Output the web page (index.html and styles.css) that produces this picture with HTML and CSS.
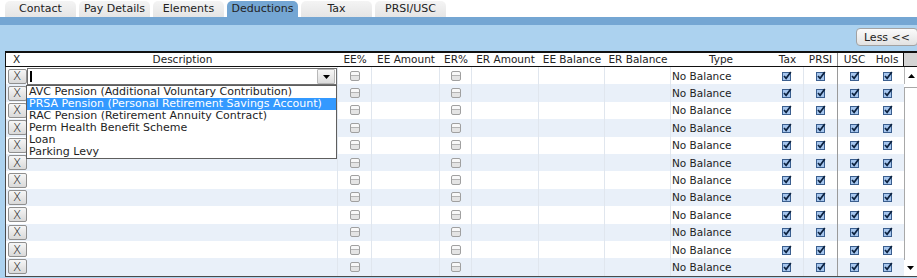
FILE: index.html
```html
<!DOCTYPE html>
<html lang="en">
<head>
  <meta charset="UTF-8">
  <meta name="viewport" content="width=device-width, initial-scale=1.0">
  <title>Employee Deductions</title>
  <link rel="stylesheet" href="styles.css">
</head>
<body>
  <div class="tabs">
    <div class="tab">Contact</div>
    <div class="tab">Pay Details</div>
    <div class="tab">Elements</div>
    <div class="tab active">Deductions</div>
    <div class="tab">Tax</div>
    <div class="tab">PRSI/USC</div>
  </div>
  <div class="tab-band"></div>

  <div class="panel">
    <div class="toolbar">
      <button class="less-btn">Less &lt;&lt;</button>
    </div>

    <div class="grid">
      <div class="grid-head">
        <div class="cols">
          <div class="hc">X</div>
          <div class="hc">Description</div>
          <div class="hc">EE%</div>
          <div class="hc">EE Amount</div>
          <div class="hc">ER%</div>
          <div class="hc">ER Amount</div>
          <div class="hc">EE Balance</div>
          <div class="hc">ER Balance</div>
          <div class="hc">Type</div>
          <div class="hc">Tax</div>
          <div class="hc split">PRSI</div>
          <div class="hc">USC</div>
          <div class="hc last">Hols</div>
        </div>
        <div class="head-corner"></div>
      </div>

      <div class="grid-body">
        <div class="rows" id="rows">
          <!-- rows are rendered below -->
        </div>
        <div class="vscroll">
          <div class="sb-btn sb-up">
            <svg width="7" height="4" viewBox="0 0 7 4"><path d="M0 4 L3.5 0 L7 4 Z" fill="#000"/></svg>
          </div>
          <div class="sb-track"><div class="sb-thumb"></div></div>
          <div class="sb-btn sb-down">
            <svg width="7" height="4" viewBox="0 0 7 4"><path d="M0 0 L7 0 L3.5 4 Z" fill="#000"/></svg>
          </div>
        </div>
      </div>
    </div>
  </div>

  <script>
    const deductionTypes = [
      'AVC Pension (Additional Voluntary Contribution)',
      'PRSA Pension (Personal Retirement Savings Account)',
      'RAC Pension (Retirement Annuity Contract)',
      'Perm Health Benefit Scheme',
      'Loan',
      'Parking Levy'
    ];

    const checked = `
      <svg class="chk" width="10" height="10" viewBox="0 0 10 10">
        <rect x="0.5" y="1.5" width="8" height="8" fill="#a6c6ee" stroke="#3a5e8e"/>
        <path d="M2 5 L4.1 7.3 L8.8 1" fill="none" stroke="#0c2240" stroke-width="1.7"/>
      </svg>`;

    const unchecked = '<span class="box"></span>';

    function comboBox() {
      return `
        <div class="combo">
          <span class="caret"></span>
          <span class="combo-btn">
            <svg width="7" height="4" viewBox="0 0 7 4"><path d="M0 0 L7 0 L3.5 4 Z" fill="#000"/></svg>
          </span>
          <ul class="combo-list">
            ${deductionTypes.map((t, i) => `<li class="${i === 1 ? 'selected' : ''}">${t}</li>`).join('')}
          </ul>
        </div>`;
    }

    function renderRow(index) {
      return `
        <div class="row">
          <div class="c c-x"><button class="del-btn">X</button></div>
          <div class="c c-desc">${index === 0 ? comboBox() : ''}</div>
          <div class="c line">${unchecked}</div>
          <div class="c line"></div>
          <div class="c line">${unchecked}</div>
          <div class="c line"></div>
          <div class="c line"></div>
          <div class="c line"></div>
          <div class="c c-type">No Balance</div>
          <div class="c line">${checked}</div>
          <div class="c split">${checked}</div>
          <div class="c">${checked}</div>
          <div class="c">${checked}</div>
        </div>`;
    }

    document.getElementById('rows').innerHTML =
      Array.from({ length: 12 }, (_, i) => renderRow(i)).join('');
  </script>
</body>
</html>
```

FILE: styles.css
```css
/* Deductions grid */
:root {
  --cols: 21px 311px 34px 68px 32px 67px 66px 66px 100px 33px 34px 33px 33px;
}

body {
  margin: 0;
  font-family: "DejaVu Sans", Verdana, sans-serif;
  font-size: 10.5px;
  color: #1e1e1e;
  background: #fff;
  overflow: hidden;
}

/* Tabs */
.tabs {
  display: flex;
  gap: 3px;
  padding: 1px 0 0 5px;
  height: 16px;
}

.tab {
  width: 71px;
  height: 16px;
  line-height: 16px;
  text-align: center;
  font-size: 11px;
  color: #222;
  background: linear-gradient(#f4f4f4, #e5e5e5);
  border-radius: 5px 5px 0 0;
}

.tab.active {
  background: #74a6d3;
}

.tab-band {
  height: 8px;
  background: #74a6d3;
}

/* Panel */
.panel {
  background: #acd2ef;
  padding-left: 5px;
  height: 253px;
}

.toolbar {
  height: 26px;
  display: flex;
  justify-content: flex-end;
  align-items: flex-start;
}

.less-btn {
  margin-top: 3px;
  width: 62px;
  height: 18px;
  padding: 0;
  margin-right: -1px;
  font-family: "DejaVu Sans", Verdana, sans-serif;
  font-size: 11px;
  color: #222;
  border: 1px solid #a2a2a2;
  border-radius: 4px;
  background: linear-gradient(#fbfbfb, #e2e2e2);
}

/* Grid header */
.grid-head {
  display: flex;
  border-top: 2px solid #111;
  border-bottom: 1px solid #111;
  border-left: 1px solid #111;
  background: #fff;
}

.cols {
  display: grid;
  grid-template-columns: var(--cols);
}

.hc {
  height: 13px;
  line-height: 13px;
  text-align: center;
  white-space: nowrap;
  color: #222;
}

.hc.split {
  border-right: 1px solid #8a8a8a;
}

.hc.last {
  border-right: 1px solid #111;
}

.head-corner {
  flex: 1;
  background: #d4d4d4;
}

/* Grid body */
.grid-body {
  display: flex;
  border-left: 1px solid #4a4a4a;
  border-bottom: 1px solid #4a4a4a;
  background: #fff;
}

.rows {
  width: 898px;
}

.row {
  display: grid;
  grid-template-columns: var(--cols);
  height: 17.4px;
}

.row:nth-child(even) {
  background: #e9f0f9;
}

.c {
  display: flex;
  align-items: center;
  justify-content: center;
  min-width: 0;
}

.c.line,
.c-desc {
  border-right: 1px solid #e0e6ee;
}

.c.split {
  border-right: 1px solid #9a9a9a;
}

.c-type {
  justify-content: flex-start;
  padding-left: 1px;
  white-space: nowrap;
}

.c-desc {
  position: relative;
  justify-content: flex-start;
  align-items: flex-start;
}

.del-btn {
  width: 19px;
  height: 15px;
  padding: 0;
  margin-left: 1px;
  border: 1px solid #8f8f8f;
  border-radius: 2px;
  background: linear-gradient(#f6f6f6, #d9d9d9);
  font-family: "DejaVu Sans", sans-serif;
  font-weight: 300;
  font-size: 12px;
  line-height: 12px;
  color: #111;
}

.box {
  width: 8px;
  height: 8px;
  border: 1px solid #a0a0a0;
  border-radius: 2px;
  background: linear-gradient(#f8f8f8 0 3px, #b4b4b4 3px 4px, #e4e4e4 4px);
}

.chk {
  display: block;
}

/* Combo box in first row */
.combo {
  position: relative;
  width: 310px;
  height: 17px;
  margin-top: 1px;
  box-sizing: border-box;
  border: 1px solid #6f6f6f;
  background: #fff;
  display: flex;
  justify-content: space-between;
  align-items: center;
  z-index: 2;
}

.caret {
  width: 2px;
  height: 11px;
  margin-left: 2px;
  background: #000;
}

.combo-btn {
  width: 16px;
  height: 13px;
  margin-right: 1px;
  border: 1px solid #b8b8b8;
  border-radius: 1px;
  background: linear-gradient(#f7f7f7, #dcdcdc);
  display: flex;
  align-items: center;
  justify-content: center;
}

.combo-list {
  position: absolute;
  top: calc(100% + 1px);
  left: -2px;
  width: 311px;
  margin: 0;
  padding: 0;
  list-style: none;
  box-sizing: border-box;
  border: 1px solid #5e5e5e;
  background: #fff;
  font-size: 11px;
}

.combo-list li {
  height: 12px;
  line-height: 12px;
  padding-left: 2px;
  white-space: nowrap;
  color: #1e1e1e;
}

.combo-list li.selected {
  background: #3399ff;
  color: #fff;
}

/* Vertical scrollbar */
.vscroll {
  flex: 1;
  display: flex;
  flex-direction: column;
  background: #fff;
}

.sb-btn {
  height: 17px;
  display: flex;
  align-items: center;
  justify-content: center;
}

.sb-up {
  border-left: 1px solid #b5b5b5;
}

.sb-track {
  flex: 1;
  padding: 3px 0 1px;
}

.sb-thumb {
  height: 100%;
  box-sizing: border-box;
  border-left: 1px solid #a8a8a8;
  border-top: 1px solid #a8a8a8;
}

.sb-down {
  height: 15px;
}
```
